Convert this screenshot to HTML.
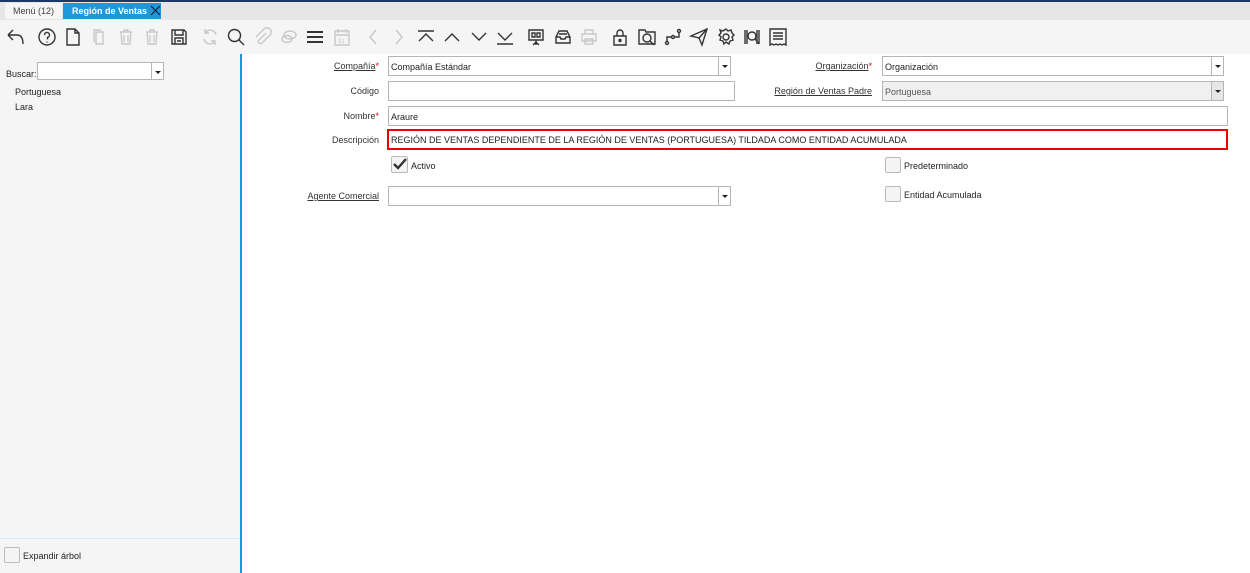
<!DOCTYPE html><html><head><meta charset="utf-8"><style>
*{box-sizing:border-box;margin:0;padding:0}
body{width:1250px;height:573px;overflow:hidden;background:#fff;font-family:"Liberation Sans",sans-serif;font-size:10px;color:#222;position:relative}
.a{position:absolute}
.lbl{position:absolute;text-align:right;font-size:9px;color:#333}
.u{text-decoration:underline}
.st{color:#e00}
.in{position:absolute;border:1px solid #b5b5b5;background:#fff;height:20px;font-size:9px;padding:5px 2px 0;line-height:10px}
.dd{position:absolute;width:13px;border:1px solid #b5b5b5;background:#fff;height:20px}
.dd:after{content:"";position:absolute;left:3px;top:8px;border-left:3px solid transparent;border-right:3px solid transparent;border-top:3px solid #222}
.cb{position:absolute;width:17px;height:17px;border:1px solid #bbb;background:#f4f4f4;border-radius:2px}
svg.i{position:absolute;top:27px;width:20px;height:20px;fill:none;stroke:#333;stroke-width:1.4}
svg.g{stroke:#c8c8c8}
</style></head><body>
<div class="a" style="left:0;top:0;width:1250px;height:2px;background:#1b3a63"></div>
<div class="a" style="left:0;top:2px;width:1250px;height:18px;background:#e6e6e6"></div>
<div class="a" style="left:5px;top:3px;width:57px;height:16px;background:#f5f5f5;font-size:9px;color:#444;padding:3px 0 0 8px">Menú (12)</div>
<div class="a" style="left:63px;top:3px;width:98px;height:16px;background:#1f97dc;font-size:9px;color:#fff;font-weight:bold;padding:3px 0 0 9px">Región de Ventas</div>
<svg class="a" style="left:150px;top:5px" width="11" height="11" viewBox="0 0 11 11"><path d="M1 1l9 9M10 1l-9 9" stroke="#123" stroke-width="1.2"/></svg>
<div class="a" style="left:0;top:20px;width:1250px;height:34px;background:#f5f5f5"></div>
<svg class="i" style="left:6px" viewBox="0 0 20 20"><path d="M2 8l5-5M2 8l5 5M2 8h9c4 0 6 3 6 9"/></svg>
<svg class="i" style="left:37px" viewBox="0 0 20 20"><circle cx="10" cy="10" r="8"/><path d="M7.5 8a2.5 2.5 0 1 1 3 2.4v2M10 14.5v1"/></svg>
<svg class="i" style="left:63px" viewBox="0 0 20 20"><path d="M4 2h8l4 4v12H4zM12 2v4h4"/></svg>
<svg class="i g" style="left:89px" viewBox="0 0 20 20"><path d="M7 5h7v12H7zM5 15V3h7"/></svg>
<svg class="i g" style="left:116px" viewBox="0 0 20 20"><path d="M4 5h12M8 5V3h4v2M5 5l1 12h8l1-12M8 8v7M12 8v7"/></svg>
<svg class="i g" style="left:142px" viewBox="0 0 20 20"><path d="M4 5h12M8 5V3h4v2M5 5l1 12h8l1-12M8 8v7M12 8v7"/></svg>
<svg class="i" style="left:169px" viewBox="0 0 20 20"><path d="M3 3h12l2 2v12H3zM6 3v5h8V3M6 17v-6h8v6M8 14h4"/></svg>
<svg class="i g" style="left:200px" viewBox="0 0 20 20"><path d="M16 8a6 6 0 0 0-11-2M4 12a6 6 0 0 0 11 2M5 2v4h4M15 18v-4h-4"/></svg>
<svg class="i" style="left:226px" viewBox="0 0 20 20"><circle cx="8.5" cy="8.5" r="6"/><path d="M13 13l5 5"/></svg>
<svg class="i g" style="left:252px" viewBox="0 0 20 20"><path d="M14 6l-7 7a2 2 0 0 0 3 3l8-8a4 4 0 0 0-6-6L4 10"/></svg>
<svg class="i g" style="left:279px" viewBox="0 0 20 20"><ellipse cx="11" cy="8" rx="6" ry="4"/><ellipse cx="8" cy="12" rx="5" ry="3.5"/></svg>
<svg class="i" style="left:305px;stroke-width:2" viewBox="0 0 20 20"><path d="M2 5h16M2 10h16M2 15h16"/></svg>
<svg class="i g" style="left:332px" viewBox="0 0 20 20"><path d="M3 4h14v14H3zM3 8h14M6 2v4M14 2v4"/><text x="6" y="16" font-size="6" fill="#c8c8c8" stroke="none">31</text></svg>
<svg class="i g" style="left:363px" viewBox="0 0 20 20"><path d="M13 3l-6 7 6 7"/></svg>
<svg class="i g" style="left:389px" viewBox="0 0 20 20"><path d="M7 3l6 7-6 7"/></svg>
<svg class="i" style="left:416px" viewBox="0 0 20 20"><path d="M2 4h16M3 14l7-7 7 7"/></svg>
<svg class="i" style="left:442px" viewBox="0 0 20 20"><path d="M3 14l7-7 7 7"/></svg>
<svg class="i" style="left:469px" viewBox="0 0 20 20"><path d="M3 6l7 7 7-7"/></svg>
<svg class="i" style="left:495px" viewBox="0 0 20 20"><path d="M3 6l7 7 7-7M2 17h16"/></svg>
<svg class="i" style="left:526px" viewBox="0 0 20 20"><path d="M3 3h14v10H3zM6 6h3v4H6zM11 6h3v4h-3zM10 13v5M7 18l3-3 3 3"/></svg>
<svg class="i" style="left:553px" viewBox="0 0 20 20"><path d="M3 10l3-6h8l3 6v6H3zM3 10h4l1 2h4l1-2h4M6 7h8"/></svg>
<svg class="i g" style="left:579px" viewBox="0 0 20 20"><path d="M6 3h8v4H6zM3 7h14v7H3zM6 12h8v5H6z"/></svg>
<svg class="i" style="left:610px" viewBox="0 0 20 20"><path d="M4 9h12v9H4zM7 9V6a3 3 0 0 1 6 0v3"/><circle cx="10" cy="13.5" r="1"/></svg>
<svg class="i" style="left:637px" viewBox="0 0 20 20"><path d="M2 3h6l1 2h9v12H2z"/><circle cx="10" cy="11" r="4"/><path d="M13 14l4 4"/></svg>
<svg class="i" style="left:663px" viewBox="0 0 20 20"><circle cx="4" cy="16" r="1.5"/><circle cx="10" cy="10" r="1.5"/><circle cx="16" cy="4" r="1.5"/><path d="M4 14v-4h5M11 10h5V6"/></svg>
<svg class="i" style="left:689px" viewBox="0 0 20 20"><path d="M2 9l16-7-5 16-3-7zM10 11l8-9"/></svg>
<svg class="i" style="left:716px" viewBox="0 0 20 20"><circle cx="10" cy="10" r="3"/><path d="M10 2l2 2 3-1 1 3 2 2-2 2 1 3-3 1-1 3-3-2-2 2-1-3-3-1 1-3-2-2 2-2-1-3 3 1z"/></svg>
<svg class="i" style="left:742px" viewBox="0 0 20 20"><path d="M3 3v14M5 3v14M15 3v14M17 3v14"/><circle cx="10" cy="9" r="4"/><path d="M13 12l4 5"/></svg>
<svg class="i" style="left:768px" viewBox="0 0 20 20"><path d="M2 2h16v16l-2-1-2 1-2-1-2 1-2-1-2 1-2-1-2 1zM5 6h10M5 9h10M5 12h10"/></svg>
<div class="a" style="left:0;top:54px;width:240px;height:519px;background:#f5f5f5"></div>
<div class="a" style="left:240px;top:54px;width:2px;height:519px;background:#0a9be3"></div>
<div class="a" style="left:6px;top:69px;font-size:9px">Buscar:</div>
<div class="in" style="left:37px;top:62px;width:115px;height:18px"></div>
<div class="dd" style="left:151px;top:62px;height:18px"></div>
<div class="a" style="left:15px;top:87px;font-size:9px">Portuguesa</div>
<div class="a" style="left:15px;top:102px;font-size:9px">Lara</div>
<div class="a" style="left:0;top:538px;width:240px;height:1px;background:#d5e8f5"></div>
<div class="cb" style="left:4px;top:547px;width:16px;height:16px"></div>
<div class="a" style="left:23px;top:551px;font-size:9px">Expandir árbol</div>
<div class="lbl" style="left:250px;width:129px;top:61px"><span class="u">Compañía</span><span class="st">*</span></div>
<div class="in" style="left:388px;top:56px;width:331px">Compañía Estándar</div><div class="dd" style="left:718px;top:56px"></div>
<div class="lbl" style="left:250px;width:129px;top:86px">Código</div>
<div class="in" style="left:388px;top:81px;width:347px"></div>
<div class="lbl" style="left:250px;width:129px;top:111px">Nombre<span class="st">*</span></div>
<div class="in" style="left:388px;top:106px;width:840px">Araure</div>
<div class="lbl" style="left:250px;width:129px;top:135px">Descripción</div>
<div class="in" style="left:387px;top:129px;width:841px;height:21px;border:2px solid #e00;padding:4px 2px 0">REGIÓN DE VENTAS DEPENDIENTE DE LA REGIÓN DE VENTAS (PORTUGUESA) TILDADA COMO ENTIDAD ACUMULADA</div>
<div class="cb" style="left:391px;top:156px"></div>
<svg class="a" style="left:391px;top:155px" width="18" height="18" viewBox="0 0 18 18"><path d="M3 9l4 4 8-9" fill="none" stroke="#333" stroke-width="2.4"/></svg>
<div class="a" style="left:411px;top:161px;font-size:9px">Activo</div>
<div class="lbl" style="left:250px;width:129px;top:191px"><span class="u">Agente Comercial</span></div>
<div class="in" style="left:388px;top:186px;width:331px"></div><div class="dd" style="left:718px;top:186px"></div>
<div class="lbl" style="left:740px;width:132px;top:61px"><span class="u">Organización</span><span class="st">*</span></div>
<div class="in" style="left:882px;top:56px;width:330px">Organización</div><div class="dd" style="left:1211px;top:56px"></div>
<div class="lbl" style="left:740px;width:132px;top:86px"><span class="u">Región de Ventas Padre</span></div>
<div class="in" style="left:882px;top:81px;width:330px;background:#f0f0f0;color:#555">Portuguesa</div><div class="dd" style="left:1211px;top:81px;background:#e6e6e6"></div>
<div class="cb" style="left:885px;top:157px;width:16px;height:16px"></div>
<div class="a" style="left:904px;top:161px;font-size:9px">Predeterminado</div>
<div class="cb" style="left:885px;top:186px;width:16px;height:16px"></div>
<div class="a" style="left:904px;top:190px;font-size:9px">Entidad Acumulada</div>
</body></html>
